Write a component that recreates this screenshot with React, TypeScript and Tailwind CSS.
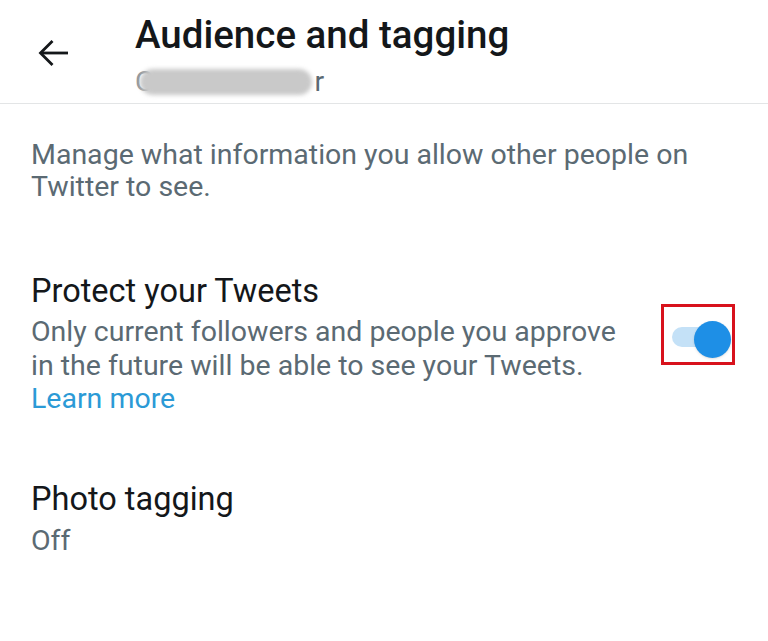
import React from 'react';

export default function App() {
  return (
    <div className="w-[768px] h-[641px] bg-white overflow-hidden" style={{ fontFamily: 'Roboto, "Noto Sans", sans-serif' }}>
      <div className="h-[104px] border-b border-[#e3e5e6] flex">
        <div className="w-[135px] flex items-start pt-[39px] pl-[38px]">
          <svg width="30" height="28" viewBox="0 0 30 28" fill="none" stroke="#14171a" strokeWidth="2.8">
            <path d="M30 14H3" />
            <path d="M14.5 2L2.5 14l12 12" />
          </svg>
        </div>
        <div className="pt-[13px]">
          <div className="text-[38.5px] leading-[44px] font-medium text-[#14171a]">Audience and tagging</div>
          <div className="mt-[8px] flex items-center text-[28.5px] leading-[34px] text-[#5b6a73]">
            <span className="text-[#8e9499]">C</span>
            <div className="w-[172px] h-[26px] bg-[#c9c9c9] rounded-full blur-[2px] -ml-[14px]" />
            <span className="ml-[3px]">r</span>
          </div>
        </div>
      </div>
      <div className="px-[31px]">
        <p className="pt-[35px] text-[28.5px] leading-[32px] text-[#5b6a73]">
          Manage what information you allow other people on<br />Twitter to see.
        </p>
        <div className="mt-[64px] flex items-start">
          <div className="flex-1">
            <div className="text-[32.5px] leading-[48px] text-[#14171a]">Protect your Tweets</div>
            <div className="text-[28.5px] leading-[33.5px] text-[#5b6a73]">
              Only current followers and people you approve<br />in the future will be able to see your Tweets.
            </div>
            <div className="text-[28.5px] leading-[33.5px] text-[#2b9ad6]">Learn more</div>
          </div>
          <div className="mt-[37px] mr-[2px] w-[74px] h-[61px] border-[3px] border-[#d8121c] pt-[20px] pl-[8px]">
            <div className="relative w-[52px] h-[20px] rounded-full bg-[#c4e1f7]">
              <div className="absolute left-[22px] -top-[6px] w-[37px] h-[37px] rounded-full bg-[#1e8fe6] shadow-sm" />
            </div>
          </div>
        </div>
        <div className="mt-[63.5px] text-[32.5px] leading-[40px] text-[#14171a]">Photo tagging</div>
        <div className="text-[28.5px] leading-[44px] text-[#5b6a73]">Off</div>
      </div>
    </div>
  );
}
